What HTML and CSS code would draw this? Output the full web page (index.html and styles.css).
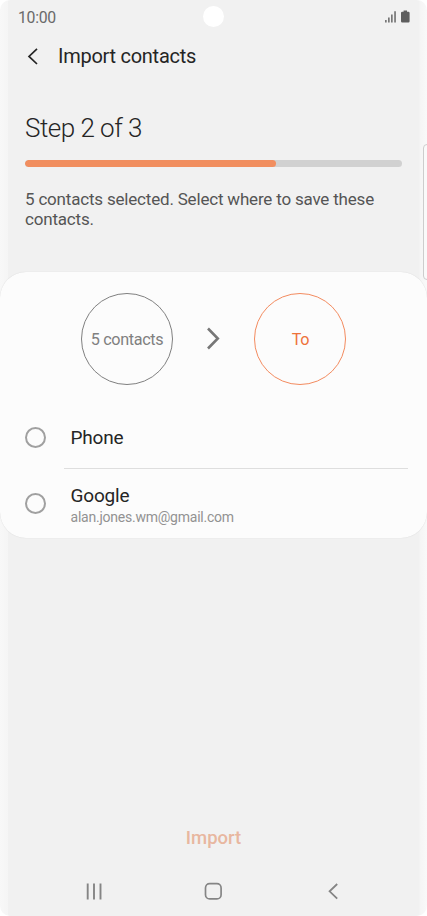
FILE: index.html
```html
<!DOCTYPE html>
<html lang="en">
<head>
<meta charset="utf-8">
<title>Import contacts</title>
<link rel="stylesheet" href="styles.css">
</head>
<body>
<main class="phone">
  <header class="status">
    <span class="time">10:00</span>
    <span class="camera"></span>
    <svg class="indicators" width="28" height="16" viewBox="0 0 28 16">
      <path fill="#777" d="M0 11h1.700v2.500H0zM3 8.500h1.700v5H3zM6 5.500h1.700v8H6zM9.200 2.300h1.700v11.200H9.200z"/>
      <path fill="#5e5e5e" d="M18.600 1.500h3.400v1.200h1.400q1.200 0 1.200 1.200v8.400q0 1.200-1.200 1.200h-6.200q-1.200 0-1.200-1.200V3.900q0-1.200 1.200-1.200h1.400z"/>
    </svg>
  </header>
  <nav class="appbar">
    <svg width="12" height="18" viewBox="0 0 12 18"><path d="M10 .8 2 8.400l8 7.600" fill="none" stroke="#252525" stroke-width="1.700"/></svg>
    <h1><span>Import contacts</span></h1>
  </nav>
  <section class="intro">
    <h2><span>Step 2 of 3</span></h2>
    <div class="progress"><div class="progress-fill"></div></div>
    <p>5 contacts selected. Select where to save these<br>contacts.</p>
  </section>
  <section class="card">
    <div class="transfer">
      <div class="circle"><span>5 contacts</span></div>
      <svg width="14" height="24" viewBox="0 0 14 24"><path d="M1 1.500 10.800 11.500 1 21.500" fill="none" stroke="#777" stroke-width="2.600"/></svg>
      <div class="circle destination"><span>To</span></div>
    </div>
    <div class="option first">
      <span class="radio"></span>
      <div class="label"><span class="name">Phone</span></div>
    </div>
    <div class="option">
      <span class="radio"></span>
      <div class="label"><span class="name">Google</span><span class="mail">alan.jones.wm@gmail.com</span></div>
    </div>
  </section>
  <div class="action"><span>Import</span></div>
  <footer class="navbar">
    <svg width="16" height="18" viewBox="0 0 16 18"><path d="M1.700 1.400v16M8 1.400v16M14.500 1.400v16" stroke="#858585" stroke-width="1.900"/></svg>
    <svg width="18" height="18" viewBox="0 0 18 18"><rect x="1.500" y="1.700" width="15.600" height="15.200" rx="4.200" fill="none" stroke="#858585" stroke-width="1.700"/></svg>
    <svg width="12" height="18" viewBox="0 0 12 18"><path d="M10.200 2 2.600 9.300l7.600 7.300" fill="none" stroke="#858585" stroke-width="1.800"/></svg>
  </footer>
  <div class="edge-handle"></div>
</main>
</body>
</html>
```
FILE: styles.css
```css
* { box-sizing: border-box; }
body { margin: 0; background: #fff; font-family: Roboto, sans-serif; color: #252525; }
svg { display: block; flex: none; }
.phone {
  position: relative; width: 427px; height: 916px; overflow: hidden;
  display: flex; flex-direction: column; border-radius: 10px;
  background: linear-gradient(90deg, #f8f8f8 0, #f5f5f5 8px, #f1f1f1 8px, #f1f1f1 419px, #f5f5f5 420px, #f9f9f9 427px);
}
.status { height: 33px; display: grid; grid-template-columns: 1fr 21px 1fr; align-items: center; padding: 0 14px 0 18px; }
.time { font-size: 15.800px; letter-spacing: -.3px; color: #6a6a6a; padding-top: 1px; }
.camera { width: 21px; height: 21px; border-radius: 50%; background: #fff; margin-left: -2px; }
.indicators { justify-self: end; }
.appbar { height: 47px; display: flex; align-items: center; padding-left: 27px; gap: 19px; }
h1 { margin: -1px 0 0; font-size: 20px; letter-spacing: -.27px; font-weight: 400; line-height: 24px; }
.intro { height: 192px; padding: 32px 25px 0; }
h2 { margin: 0; font-size: 26px; letter-spacing: -.52px; font-weight: 300; line-height: 32px; }
.progress { height: 7px; margin-top: 16px; border-radius: 4px; background: #d1d1d1; overflow: hidden; }
.progress-fill { width: 251px; height: 7px; border-radius: 4px; background: #f18e5f; }
.intro p { margin: 23px 0 0; font-size: 17px; letter-spacing: -.19px; line-height: 19.500px; color: #555; white-space: nowrap; }
.card { height: 266px; border-radius: 26px; background: #fcfcfc; box-shadow: 0 0 1px rgba(0, 0, 0, .16); }
.transfer { height: 133px; display: flex; align-items: center; justify-content: center; gap: 33.500px; }
.circle { width: 92px; height: 92px; padding-top: 2px; border: 1.300px solid #808080; border-radius: 50%; display: flex; align-items: center; justify-content: center; font-size: 16.200px; letter-spacing: -.34px; color: #808080; }
.destination { padding-left: 1px; border-color: #f38b5f; color: #ee723a; }
.option { height: 69px; display: flex; align-items: center; padding-left: 25px; }
.first { height: 64px; }
.radio { width: 21px; height: 21px; border: 2px solid #a0a0a0; border-radius: 50%; }
.label { flex: 1; align-self: stretch; margin: 0 19px 0 18px; padding: 5px 0 0 6.500px; display: flex; flex-direction: column; justify-content: center; align-items: flex-start; }
.first .label { padding-top: 3px; border-bottom: 1px solid #dedede; }
.name { font-size: 19px; letter-spacing: -.2px; line-height: 22px; }
.mail { font-size: 14px; letter-spacing: -.23px; line-height: 20px; color: #929292; }
.action { margin-top: auto; height: 58px; text-align: center; font-size: 18.500px; font-weight: 500; line-height: 40px; color: #e8b7a0; }
.navbar { height: 40px; display: flex; justify-content: space-between; padding: 6px 88px 0 86px; }
.navbar svg:nth-child(2) { margin-left: -3px; }
.edge-handle { position: absolute; left: 423px; top: 144px; width: 10px; height: 136px; border: 1px solid #cdcdcd; border-radius: 4px; background: #fafafa; }
```
